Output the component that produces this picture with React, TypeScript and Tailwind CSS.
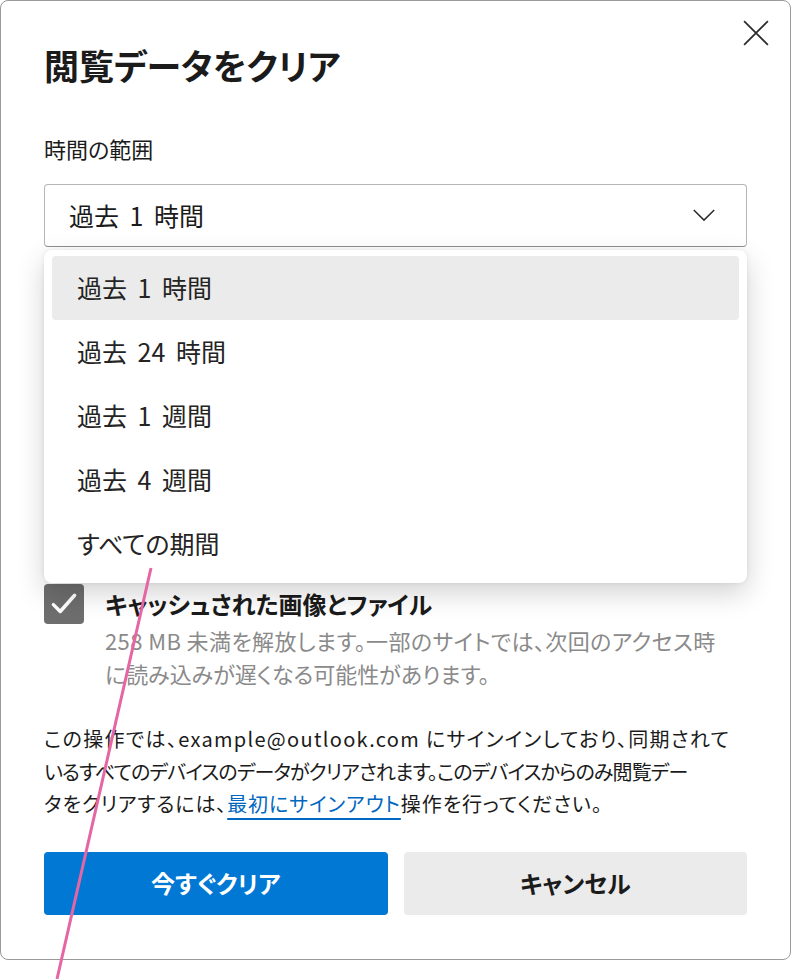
import React from "react";

const font = "font-['Noto_Sans_CJK_JP','Noto_Sans',sans-serif] [font-feature-settings:'palt']";

function Check() {
  return (
    <svg viewBox="0 0 24 24" className="h-[30px] w-[30px]" fill="none" stroke="white" strokeWidth="2.8" strokeLinecap="round" strokeLinejoin="round">
      <path d="M3.5 12.5 L9 18 L20.5 5" />
    </svg>
  );
}

export default function App() {
  const items = ["過去 1 時間", "過去 24 時間", "過去 1 週間", "過去 4 週間", "すべての期間"];
  return (
    <div className={`relative min-h-[979px] w-[791px] bg-white ${font}`}>
      <div className="relative h-[960px] w-[791px] rounded-[8px] border border-[#9a9a9a] bg-white px-[43px] pt-[38px]">
        <button className="absolute right-[21px] top-[19px] flex h-[26px] w-[26px] items-center justify-center" aria-label="close">
          <svg viewBox="0 0 24 24" className="h-[26px] w-[26px]" fill="none" stroke="#2b2b2b" strokeWidth="1.6">
            <path d="M1 1 L23 23 M23 1 L1 23" />
          </svg>
        </button>
        <h1 className="text-[35px] font-bold leading-[52px] text-[#1b1b1b]">閲覧データをクリア</h1>
        <div className="mt-[43px] text-[22px] leading-[28px] text-[#1b1b1b]">時間の範囲</div>
        <div className="relative mt-[22px]">
          <div className="flex h-[63px] items-center justify-between rounded-[4px] border border-[#b5b5b5] border-b-[#8f8f8f] bg-white pl-[24px] pr-[30px]">
            <span className="text-[25px] text-[#1b1b1b] [word-spacing:5px]">過去 1 時間</span>
            <svg viewBox="0 0 24 14" className="h-[13px] w-[24px]" fill="none" stroke="#2b2b2b" strokeWidth="1.6">
              <path d="M1 1 L12 12 L23 1" />
            </svg>
          </div>
          <div className="absolute left-0 right-0 top-[66px] z-10 flex flex-col rounded-[8px] bg-white px-[8px] pb-[7px] pt-[6px] shadow-[0_10px_28px_rgba(0,0,0,0.18),0_0_4px_rgba(0,0,0,0.08)]">
            {items.map((t, i) => (
              <div
                key={t}
                className={`flex h-[64px] items-center rounded-[4px] pl-[25px] text-[25px] text-[#242424] [word-spacing:5px] ${i === 0 ? "bg-[#ebebeb]" : ""}`}
              >
                {t}
              </div>
            ))}
          </div>
        </div>
        <div className="h-[337px]" />
        <div className="flex items-start gap-[21px]">
          <div className="flex h-[40px] w-[40px] shrink-0 items-center justify-center rounded-[4px] bg-[#6e6e6e]">
            <Check />
          </div>
          <div className="flex flex-col">
            <div className="text-[24px] font-bold leading-[40px] text-[#1b1b1b]">キャッシュされた画像とファイル</div>
            <div className="whitespace-nowrap text-[22px] leading-[33px] text-[#8a8a8a]">
              <span className="tracking-[0.4px]">258 MB 未満を解放します。一部のサイトでは、次回のアクセス時</span>
              <br />
              に読み込みが遅くなる可能性があります。
            </div>
          </div>
        </div>
        <p className="mt-[33px] whitespace-nowrap text-[20px] leading-[32.5px] text-[#1b1b1b]">
          <span className="tracking-[1.3px]">この操作では、example@outlook.com にサインインしており、同期されて</span>
          <br />
          <span className="tracking-[-0.9px]">いるすべてのデバイスのデータがクリアされます。このデバイスからのみ閲覧デー</span>
          <br />
          <span className="tracking-[0.9px]">
            タをクリアするには、
            <a className="text-[#0067c0] underline decoration-[#0067c0] decoration-2 underline-offset-[6px]">最初にサインアウト</a>
            操作を行ってください。
          </span>
        </p>
        <div className="mt-[31px] flex gap-[16px]">
          <button className="flex h-[63px] flex-1 items-center justify-center rounded-[4px] bg-[#0078d4] text-[24px] font-bold text-white">
            今すぐクリア
          </button>
          <button className="flex h-[63px] flex-1 items-center justify-center rounded-[4px] bg-[#ebebeb] text-[24px] font-bold text-[#1b1b1b]">
            キャンセル
          </button>
        </div>
      </div>
      <svg className="pointer-events-none absolute left-0 top-0 z-20 h-[979px] w-[791px]" viewBox="0 0 791 979">
        <line x1="151" y1="568" x2="57" y2="979" stroke="#e466a4" strokeWidth="3" />
      </svg>
    </div>
  );
}
